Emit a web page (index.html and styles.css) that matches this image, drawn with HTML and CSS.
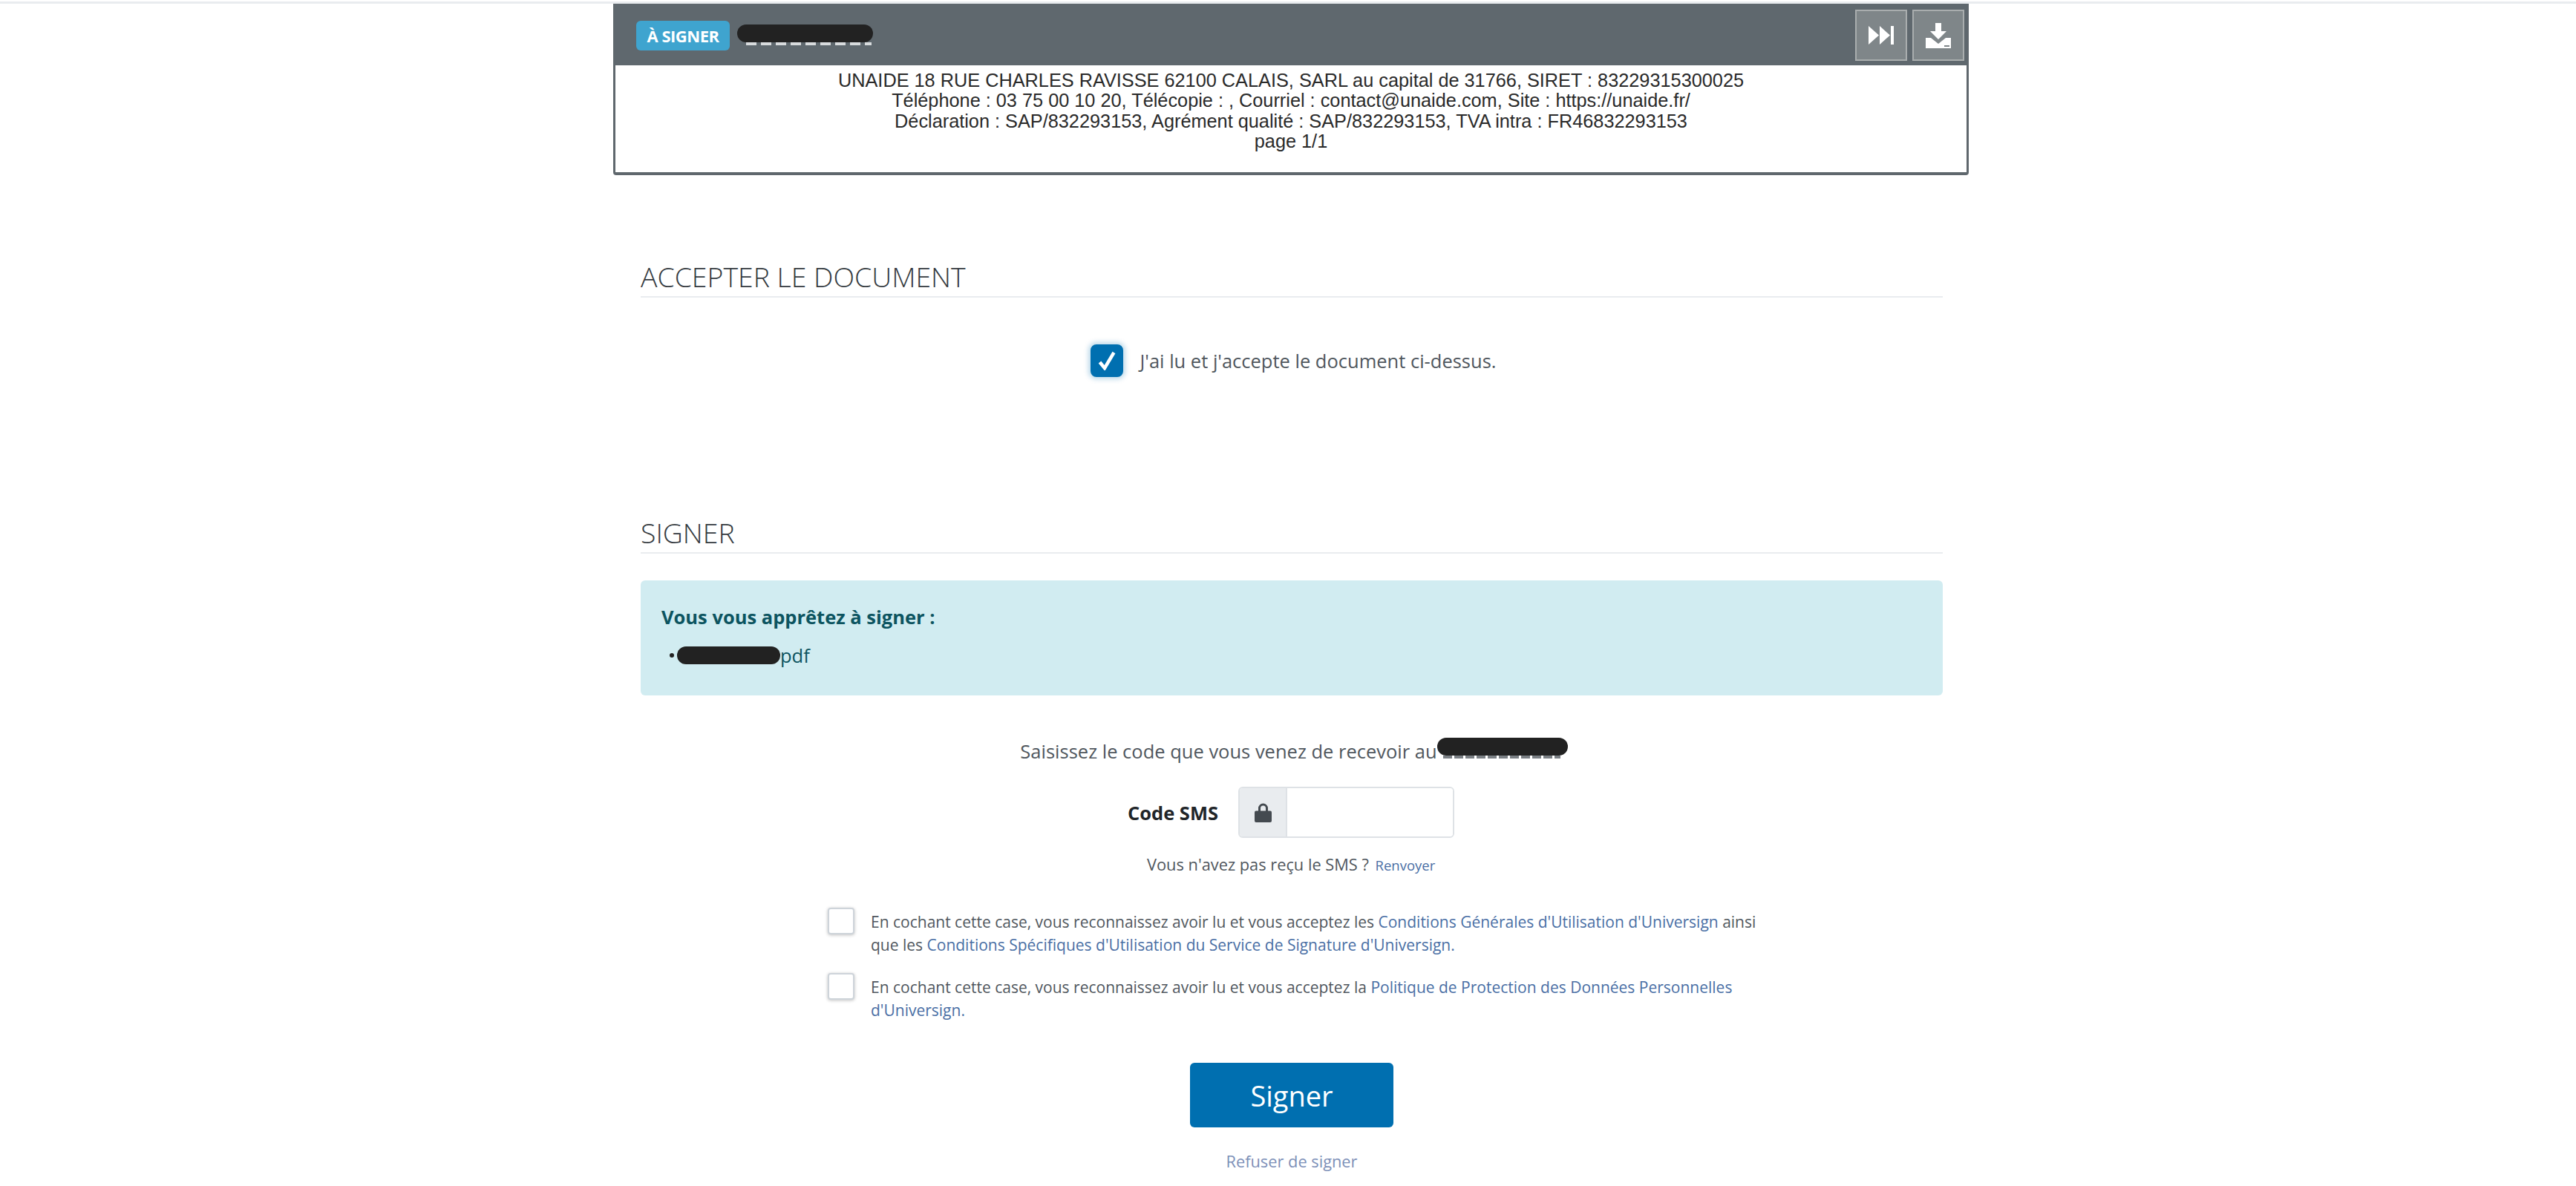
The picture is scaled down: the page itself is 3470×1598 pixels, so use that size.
FILE: index.html
```html
<!DOCTYPE html>
<html lang="fr">
<head>
    <meta charset="UTF-8">
    <title>Signature du document</title>
    <link rel="stylesheet" href="styles.css">
</head>
<body>
    <div class="top-line"></div>
    <div class="page">
        <div class="viewer">
            <div class="viewer-bar">
                <div class="viewer-title">
                    <span class="badge">À SIGNER</span>
                    <span class="redact redact-title"></span>
                </div>
                <div class="viewer-actions">
                    <div class="viewer-button">
                        <svg width="34" height="25" viewBox="0 0 34 25"><path d="M0 0 L14 12.5 L0 25Z M15 0 L29 12.5 L15 25Z M30 0 H34 V25 H30Z" fill="#fff"/></svg>
                    </div>
                    <div class="viewer-button">
                        <svg width="34" height="34" viewBox="0 0 34 34"><path d="M13 0 H21 V11 H28 L17 22 L6 11 H13Z M0 20 H7 L17 28 L27 20 H34 V34 H0Z" fill="#fff"/><rect x="25" y="30" width="7" height="2" fill="#7f8689"/></svg>
                    </div>
                </div>
            </div>
            <div class="viewer-doc">
                <p>UNAIDE 18 RUE CHARLES RAVISSE 62100 CALAIS, SARL au capital de 31766, SIRET : 83229315300025</p>
                <p>Téléphone : 03 75 00 10 20, Télécopie : , Courriel : contact@unaide.com, Site : https://unaide.fr/</p>
                <p>Déclaration : SAP/832293153, Agrément qualité : SAP/832293153, TVA intra : FR46832293153</p>
                <p>page 1/1</p>
            </div>
        </div>

        <div class="section section-accept">
            <h2 class="section-title">ACCEPTER LE DOCUMENT</h2>
            <div class="accept-row">
                <span class="check check-on">
                    <svg width="24" height="26" viewBox="0 0 24 26"><path d="M2.5 15 L9 23 L21.5 2" fill="none" stroke="#fff" stroke-width="4.5"/></svg>
                </span>
                <span>J'ai lu et j'accepte le document ci-dessus.</span>
            </div>
        </div>

        <div class="section section-sign">
            <h2 class="section-title">SIGNER</h2>
            <div class="alert">
                <div class="alert-head">Vous vous apprêtez à signer :</div>
                <div class="alert-file">
                    <span class="bullet"></span>
                    <span class="redact redact-file"></span>
                    <span>pdf</span>
                </div>
            </div>
            <div class="sms-intro">
                <span>Saisissez le code que vous venez de recevoir au</span>
                <span class="redact redact-phone"></span>
            </div>
            <div class="sms-row">
                <label class="sms-label">Code SMS</label>
                <div class="input-group">
                    <div class="input-addon">
                        <svg width="23" height="26" viewBox="0 0 23 26"><path d="M5 11 V7 a6.5 6.5 0 0 1 13 0 V11 h-3 V7 a3.5 3.5 0 0 0 -7 0 V11Z" fill="#444a50"/><rect x="0" y="10.5" width="23" height="15.5" rx="2" fill="#444a50"/></svg>
                    </div>
                    <div class="input-field"></div>
                </div>
            </div>
            <div class="sms-resend">Vous n'avez pas reçu le SMS ? <a class="resend-link">Renvoyer</a></div>
            <div class="terms">
                <div class="term">
                    <span class="check"></span>
                    <p>En cochant cette case, vous reconnaissez avoir lu et vous acceptez les <a>Conditions Générales d'Utilisation d'Universign</a> ainsi que les <a>Conditions Spécifiques d'Utilisation du Service de Signature d'Universign.</a></p>
                </div>
                <div class="term">
                    <span class="check"></span>
                    <p>En cochant cette case, vous reconnaissez avoir lu et vous acceptez la <a>Politique de Protection des Données Personnelles d'Universign.</a></p>
                </div>
            </div>
            <div class="sign-actions">
                <button class="sign-button">Signer</button>
                <a class="refuse-link">Refuser de signer</a>
            </div>
        </div>
    </div>
</body>
</html>
```

FILE: styles.css
```css
html, body {
    margin: 0;
    padding: 0;
    background: #fff;
}
body {
    font-family: "Open Sans", "Liberation Sans", sans-serif;
    color: #50575e;
    font-size: 25.5px;
}
p {
    margin: 0;
}
.top-line {
    height: 3px;
    margin-top: 2px;
    background: #e9ecef;
}
.page {
    width: 1826px;
    margin-left: 826px;
    height: 1590px;
    overflow: hidden;
}
.viewer {
    border: 3px solid #5f676d;
    border-top: 0;
    border-bottom-width: 4px;
    border-radius: 0 0 4px 4px;
}
.viewer-bar {
    height: 83px;
    background: #5f686e;
    display: flex;
    justify-content: space-between;
    padding: 0 3px 0 28px;
    box-sizing: border-box;
}
.viewer-title {
    display: flex;
    align-items: center;
    gap: 10px;
    padding-top: 3px;
}
.badge {
    width: 126px;
    height: 40px;
    line-height: 40px;
    background: #3fa4cf;
    color: #fff;
    border-radius: 6px;
    font-size: 22px;
    font-weight: 700;
    text-align: center;
    letter-spacing: -0.5px;
}
.redact {
    display: inline-block;
    position: relative;
    background: #222;
    border-radius: 12px;
}
.redact-title {
    width: 183px;
    height: 24px;
    margin-top: -6px;
}
/* bits of the hidden text that stick out under the black mark */
.redact-title::after,
.redact-phone::after {
    content: "";
    position: absolute;
    left: 12px;
    right: 2px;
    bottom: -4px;
    height: 4px;
    background: repeating-linear-gradient(90deg, #d8dbdd 0 14px, transparent 14px 20px);
}
.redact-phone::after {
    left: 8px;
    right: 10px;
    background: repeating-linear-gradient(90deg, #7a7f84 0 12px, transparent 12px 15px);
}
.viewer-actions {
    display: flex;
    gap: 7px;
    padding-top: 8px;
}
.viewer-button {
    width: 70px;
    height: 69px;
    box-sizing: border-box;
    border: 2px solid #a9adae;
    background: #7f8689;
    display: flex;
    align-items: center;
    justify-content: center;
}
.viewer-doc {
    height: 144px;
    background: #fff;
    box-sizing: border-box;
    padding-top: 7px;
    color: #2a2a2a;
    font-family: "Liberation Sans", Arial, sans-serif;
    font-size: 25.3px;
    line-height: 27.3px;
    text-align: center;
}
.section {
    margin: 0 35px 0 37px;
}
.section-title {
    margin: 0;
    height: 46px;
    font-size: 37.4px;
    font-weight: 300;
    line-height: 40px;
    color: #343a40;
    border-bottom: 2px solid #e9ecef;
}
.section-accept {
    margin-top: 117px;
}
.accept-row {
    display: flex;
    align-items: center;
    justify-content: center;
    gap: 22px;
    margin-top: 63px;
    padding-left: 5px;
}
.section-sign {
    margin-top: 190px;
}
.check {
    width: 36px;
    height: 36px;
    box-sizing: border-box;
    flex: none;
    background: #fff;
    border: 2px solid #ced4da;
    border-radius: 4px;
    box-shadow: 0 1px 4px rgba(0, 0, 0, 0.25);
}
.check-on {
    width: 44px;
    height: 44px;
    background: #006fb0;
    border-color: #006fb0;
    box-shadow: 0 0 6px 3px rgba(0, 111, 176, 0.25);
    border-radius: 8px;
    display: flex;
    align-items: center;
    justify-content: center;
}
.alert {
    margin-top: 36px;
    height: 155px;
    background: #d1ecf1;
    border-radius: 6px;
    color: #0c5460;
    box-sizing: border-box;
    padding: 33px 28px 0;
}
.alert-head {
    font-weight: 700;
    line-height: 32px;
}
.alert-file {
    display: flex;
    align-items: center;
    margin-top: 20px;
    padding-left: 11px;
    height: 32px;
}
.bullet {
    width: 6px;
    height: 6px;
    border-radius: 50%;
    background: #222;
    margin-right: 4px;
}
.redact-file {
    width: 139px;
    height: 24px;
}
.sms-intro {
    display: flex;
    justify-content: center;
    align-items: center;
    margin-top: 59px;
    height: 32px;
    padding-left: 6px;
}
.redact-phone {
    width: 176px;
    height: 24px;
    margin-top: -12px;
}
.sms-row {
    display: flex;
    align-items: center;
    margin-top: 32px;
    margin-left: 656px;
    gap: 27px;
}
.sms-label {
    font-weight: 700;
    color: #212529;
}
.input-group {
    display: flex;
    width: 291px;
    height: 69px;
    box-sizing: border-box;
    border: 2px solid #dee2e6;
    border-radius: 6px;
    overflow: hidden;
}
.input-addon {
    width: 62px;
    background: #e9ecef;
    border-right: 2px solid #dee2e6;
    display: flex;
    align-items: center;
    justify-content: center;
}
.input-field {
    flex: 1;
    background: #fff;
}
.sms-resend {
    margin-top: 22px;
    margin-left: 682px;
    font-size: 21.8px;
    line-height: 27px;
}
.resend-link {
    margin-left: 3px;
    font-size: 18.5px;
    color: #4a6fa5;
}
.terms {
    margin-top: 44px;
    margin-left: 252px;
    width: 1280px;
}
.term {
    display: flex;
    gap: 22px;
    margin-bottom: 22px;
    font-size: 21px;
    line-height: 31px;
}
.term p {
    padding-top: 4px;
}
.term a {
    color: #4a6fa5;
}
.sign-actions {
    display: flex;
    flex-direction: column;
    align-items: center;
    margin-top: 55px;
}
.sign-button {
    width: 274px;
    height: 87px;
    background: #006fb0;
    color: #fff;
    border: 0;
    border-radius: 6px;
    font-family: inherit;
    font-size: 38px;
}
.refuse-link {
    margin-top: 31px;
    font-size: 21.8px;
    color: #7d90b8;
}
```
